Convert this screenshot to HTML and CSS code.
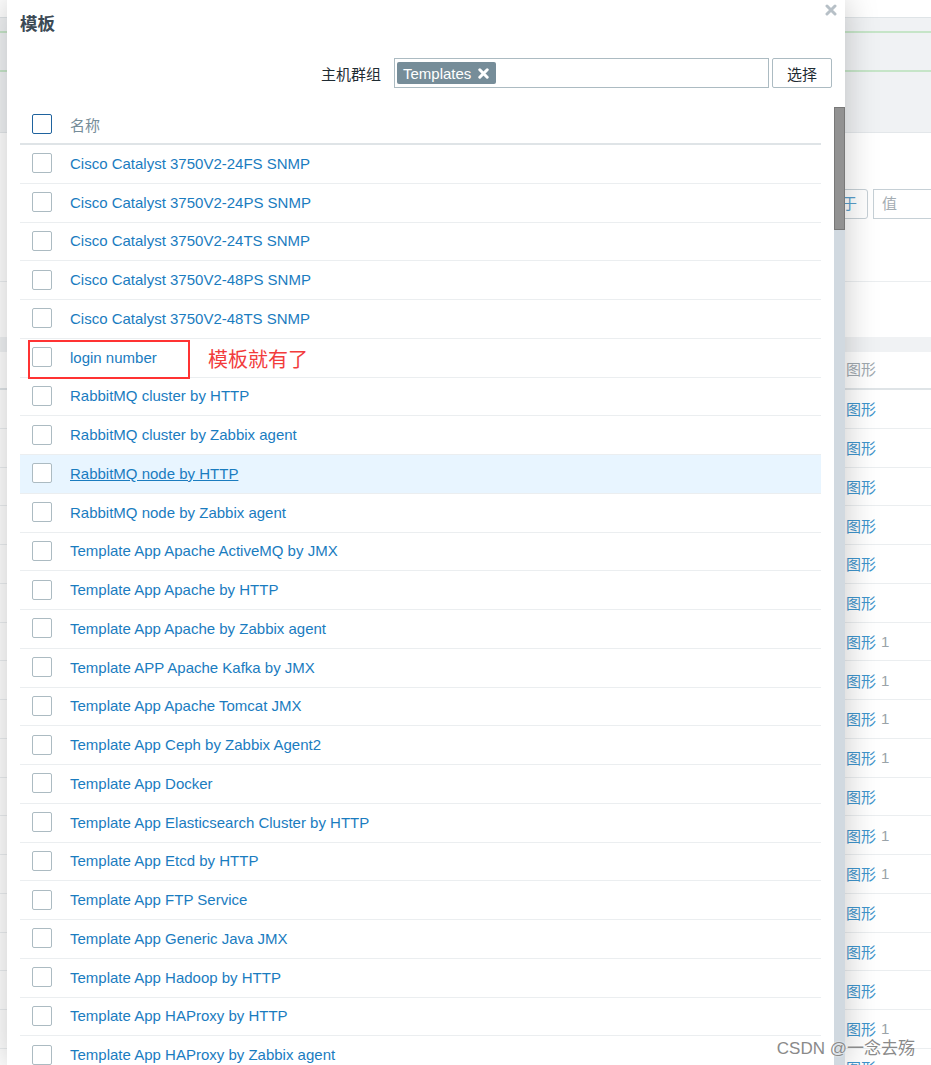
FILE: index.html
```html
<!DOCTYPE html>
<html>
  <head>
    <meta charset="utf-8">
    <title>模板</title>
    <link rel="stylesheet" href="styles.css">
  </head>
  <body>
    <!-- page behind the popup -->
    <div class="page">
      <div class="page-top"></div>
      <div class="page-nav">
        <div class="nav-line"></div>
        <div class="nav-line"></div>
      </div>
      <div class="page-filter">
        <div class="op-select">等于</div>
        <div class="val-input">值</div>
      </div>
      <div class="page-gap"></div>
      <div class="page-band"></div>
      <div class="page-thead">图形</div>
      <div class="page-row"><span class="graph-link">图形</span></div>
      <div class="page-row"><span class="graph-link">图形</span></div>
      <div class="page-row"><span class="graph-link">图形</span></div>
      <div class="page-row"><span class="graph-link">图形</span></div>
      <div class="page-row"><span class="graph-link">图形</span></div>
      <div class="page-row"><span class="graph-link">图形</span></div>
      <div class="page-row"><span class="graph-link">图形</span><span class="graph-count">1</span></div>
      <div class="page-row"><span class="graph-link">图形</span><span class="graph-count">1</span></div>
      <div class="page-row"><span class="graph-link">图形</span><span class="graph-count">1</span></div>
      <div class="page-row"><span class="graph-link">图形</span><span class="graph-count">1</span></div>
      <div class="page-row"><span class="graph-link">图形</span></div>
      <div class="page-row"><span class="graph-link">图形</span><span class="graph-count">1</span></div>
      <div class="page-row"><span class="graph-link">图形</span><span class="graph-count">1</span></div>
      <div class="page-row"><span class="graph-link">图形</span></div>
      <div class="page-row"><span class="graph-link">图形</span></div>
      <div class="page-row"><span class="graph-link">图形</span></div>
      <div class="page-row"><span class="graph-link">图形</span><span class="graph-count">1</span></div>
      <div class="page-row"><span class="graph-link">图形</span></div>
    </div>

    <!-- popup -->
    <div class="dialog">
      <h4 class="dialog-title">模板</h4>
      <svg class="dialog-close" width="12" height="12" viewBox="0 0 12 12"><path d="M2 2l8 8M10 2l-8 8" stroke="#b7c0c7" stroke-width="3" stroke-linecap="round"/></svg>

      <div class="filter">
        <span class="filter-label">主机群组</span>
        <div class="multiselect">
          <span class="tag">Templates<svg width="11" height="11" viewBox="0 0 11 11"><path d="M1.8 1.8l7.4 7.4M9.2 1.8l-7.4 7.4" stroke="#fff" stroke-width="3" stroke-linecap="round"/></svg></span>
        </div>
        <button class="btn">选择</button>
      </div>

      <div class="list">
        <div class="table">
          <div class="list-head"><span class="check check-focus"></span>名称</div>
          <div class="row"><span class="check"></span><a class="link">Cisco Catalyst 3750V2-24FS SNMP</a></div>
          <div class="row"><span class="check"></span><a class="link">Cisco Catalyst 3750V2-24PS SNMP</a></div>
          <div class="row"><span class="check"></span><a class="link">Cisco Catalyst 3750V2-24TS SNMP</a></div>
          <div class="row"><span class="check"></span><a class="link">Cisco Catalyst 3750V2-48PS SNMP</a></div>
          <div class="row"><span class="check"></span><a class="link">Cisco Catalyst 3750V2-48TS SNMP</a></div>
          <div class="row">
            <span class="check"></span><a class="link">login number</a>
            <span class="mark"></span>
            <span class="mark-note">模板就有了</span>
          </div>
          <div class="row"><span class="check"></span><a class="link">RabbitMQ cluster by HTTP</a></div>
          <div class="row"><span class="check"></span><a class="link">RabbitMQ cluster by Zabbix agent</a></div>
          <div class="row hover"><span class="check"></span><a class="link">RabbitMQ node by HTTP</a></div>
          <div class="row"><span class="check"></span><a class="link">RabbitMQ node by Zabbix agent</a></div>
          <div class="row"><span class="check"></span><a class="link">Template App Apache ActiveMQ by JMX</a></div>
          <div class="row"><span class="check"></span><a class="link">Template App Apache by HTTP</a></div>
          <div class="row"><span class="check"></span><a class="link">Template App Apache by Zabbix agent</a></div>
          <div class="row"><span class="check"></span><a class="link">Template APP Apache Kafka by JMX</a></div>
          <div class="row"><span class="check"></span><a class="link">Template App Apache Tomcat JMX</a></div>
          <div class="row"><span class="check"></span><a class="link">Template App Ceph by Zabbix Agent2</a></div>
          <div class="row"><span class="check"></span><a class="link">Template App Docker</a></div>
          <div class="row"><span class="check"></span><a class="link">Template App Elasticsearch Cluster by HTTP</a></div>
          <div class="row"><span class="check"></span><a class="link">Template App Etcd by HTTP</a></div>
          <div class="row"><span class="check"></span><a class="link">Template App FTP Service</a></div>
          <div class="row"><span class="check"></span><a class="link">Template App Generic Java JMX</a></div>
          <div class="row"><span class="check"></span><a class="link">Template App Hadoop by HTTP</a></div>
          <div class="row"><span class="check"></span><a class="link">Template App HAProxy by HTTP</a></div>
          <div class="row"><span class="check"></span><a class="link">Template App HAProxy by Zabbix agent</a></div>
        </div>
        <div class="scrollbar"><div class="scroll-thumb"></div></div>
      </div>
    </div>

    <div class="watermark">CSDN @一念去殇</div>
  </body>
</html>
```

FILE: styles.css
```css
* {
  box-sizing: border-box;
}

body {
  margin: 0;
  height: 1065px;
  overflow: hidden;
  position: relative;
  background: #fff;
  font-family: "Liberation Sans", "Noto Sans CJK SC", sans-serif;
  font-size: 15px;
  color: #1f2c33;
}

/* page behind */
.page {
  width: 931px;
  overflow: hidden;
}

.page-top {
  height: 18px;
  border-bottom: 1px solid #dfe4e7;
}

.page-nav {
  height: 115px;
  padding-top: 13px;
  background: #f0f2f4;
  border-bottom: 1px solid #e3e7ea;
}

.nav-line {
  height: 2px;
  background: #c6e5c8;
}

.nav-line + .nav-line {
  margin-top: 37px;
}

.page-filter {
  display: flex;
  gap: 5px;
  height: 149px;
  padding: 56px 0 0 780px;
  border-bottom: 1px solid #ebeef0;
}

.op-select {
  flex: none;
  width: 88px;
  height: 30px;
  line-height: 28px;
  padding-right: 10px;
  text-align: right;
  color: #5a9fcc;
  border: 1px solid #c6d0d6;
  border-radius: 3px;
}

.val-input {
  flex: none;
  width: 160px;
  height: 30px;
  line-height: 28px;
  padding-left: 8px;
  color: #a3acb2;
  border: 1px solid #c6d0d6;
}

.page-gap {
  height: 55px;
}

.page-band {
  height: 15px;
  background: #f0f2f4;
}

.page-thead {
  height: 38px;
  line-height: 36px;
  padding-left: 846px;
  color: #a0a9b0;
  border-bottom: 2px solid #dfe4e7;
}

.page-row {
  display: flex;
  align-items: center;
  height: 38.75px;
  padding-left: 846px;
  border-bottom: 1px solid #ebeef0;
}

.graph-link {
  color: #3f95cc;
}

.graph-count {
  margin-left: 5px;
  color: #9aa3a9;
}

/* popup */
.dialog {
  position: absolute;
  left: 7px;
  top: 0;
  width: 838px;
  height: 1065px;
  overflow: hidden;
  background: #fff;
  box-shadow: 0 0 32px rgba(0, 0, 0, 0.22);
}

.dialog-title {
  margin: 0;
  padding: 12px 13px 0;
  font-size: 17.5px;
  line-height: 24px;
  font-weight: bold;
  color: #3c4a55;
}

.dialog-close {
  position: absolute;
  top: 4px;
  right: 8px;
}

.filter {
  display: flex;
  align-items: center;
  justify-content: flex-end;
  margin-top: 22px;
  padding-right: 13px;
}

.filter-label {
  margin-right: 13px;
}

.multiselect {
  width: 375px;
  height: 30px;
  padding: 3px 2px;
  border: 1px solid #acbbc2;
}

.tag {
  display: inline-flex;
  align-items: center;
  height: 22px;
  padding: 0 7px 0 6px;
  border-radius: 2px;
  background: #768d99;
  color: #fff;
}

.tag svg {
  margin-left: 7px;
}

.btn {
  width: 60px;
  height: 30px;
  margin-left: 3px;
  padding: 0;
  border: 1px solid #acbbc2;
  border-radius: 2px;
  background: #fff;
  font: inherit;
  color: #1f2c33;
}

.list {
  display: flex;
  margin-top: 19px;
}

.table {
  flex: 1;
  margin: 0 13px;
}

.scrollbar {
  width: 11px;
  background: #d1d9e0;
}

.scroll-thumb {
  height: 123px;
  background: #929292;
  border: 1px solid #787878;
}

.list-head {
  display: flex;
  align-items: center;
  height: 38px;
  padding-bottom: 2px;
  color: #768d99;
  border-bottom: 2px solid #dfe4e7;
}

.row {
  position: relative;
  display: flex;
  align-items: center;
  height: 38.75px;
  padding-bottom: 1px;
  border-bottom: 1px solid #ebeef0;
}

.row.hover {
  background: #e8f5ff;
}

.check {
  flex: none;
  width: 20px;
  height: 20px;
  margin: 0 18px 0 12px;
  border: 1px solid #acbbc2;
  border-radius: 2px;
  background: #fff;
}

.check-focus {
  border-color: #1f639e;
}

.link {
  color: #1a7cbf;
  text-decoration: none;
}

.row.hover .link {
  text-decoration: underline;
}

/* red annotation */
.mark {
  position: absolute;
  left: 8px;
  top: 1px;
  width: 162px;
  height: 39px;
  border: 2px solid #f33;
}

.mark-note {
  position: absolute;
  left: 188px;
  top: 50%;
  transform: translateY(-50%);
  font-size: 20px;
  color: #f23c3c;
}

.watermark {
  position: absolute;
  right: 16px;
  bottom: 6px;
  font-size: 17px;
  color: #8a8a8a;
  text-shadow: 0 0 2px #fff;
}
```
